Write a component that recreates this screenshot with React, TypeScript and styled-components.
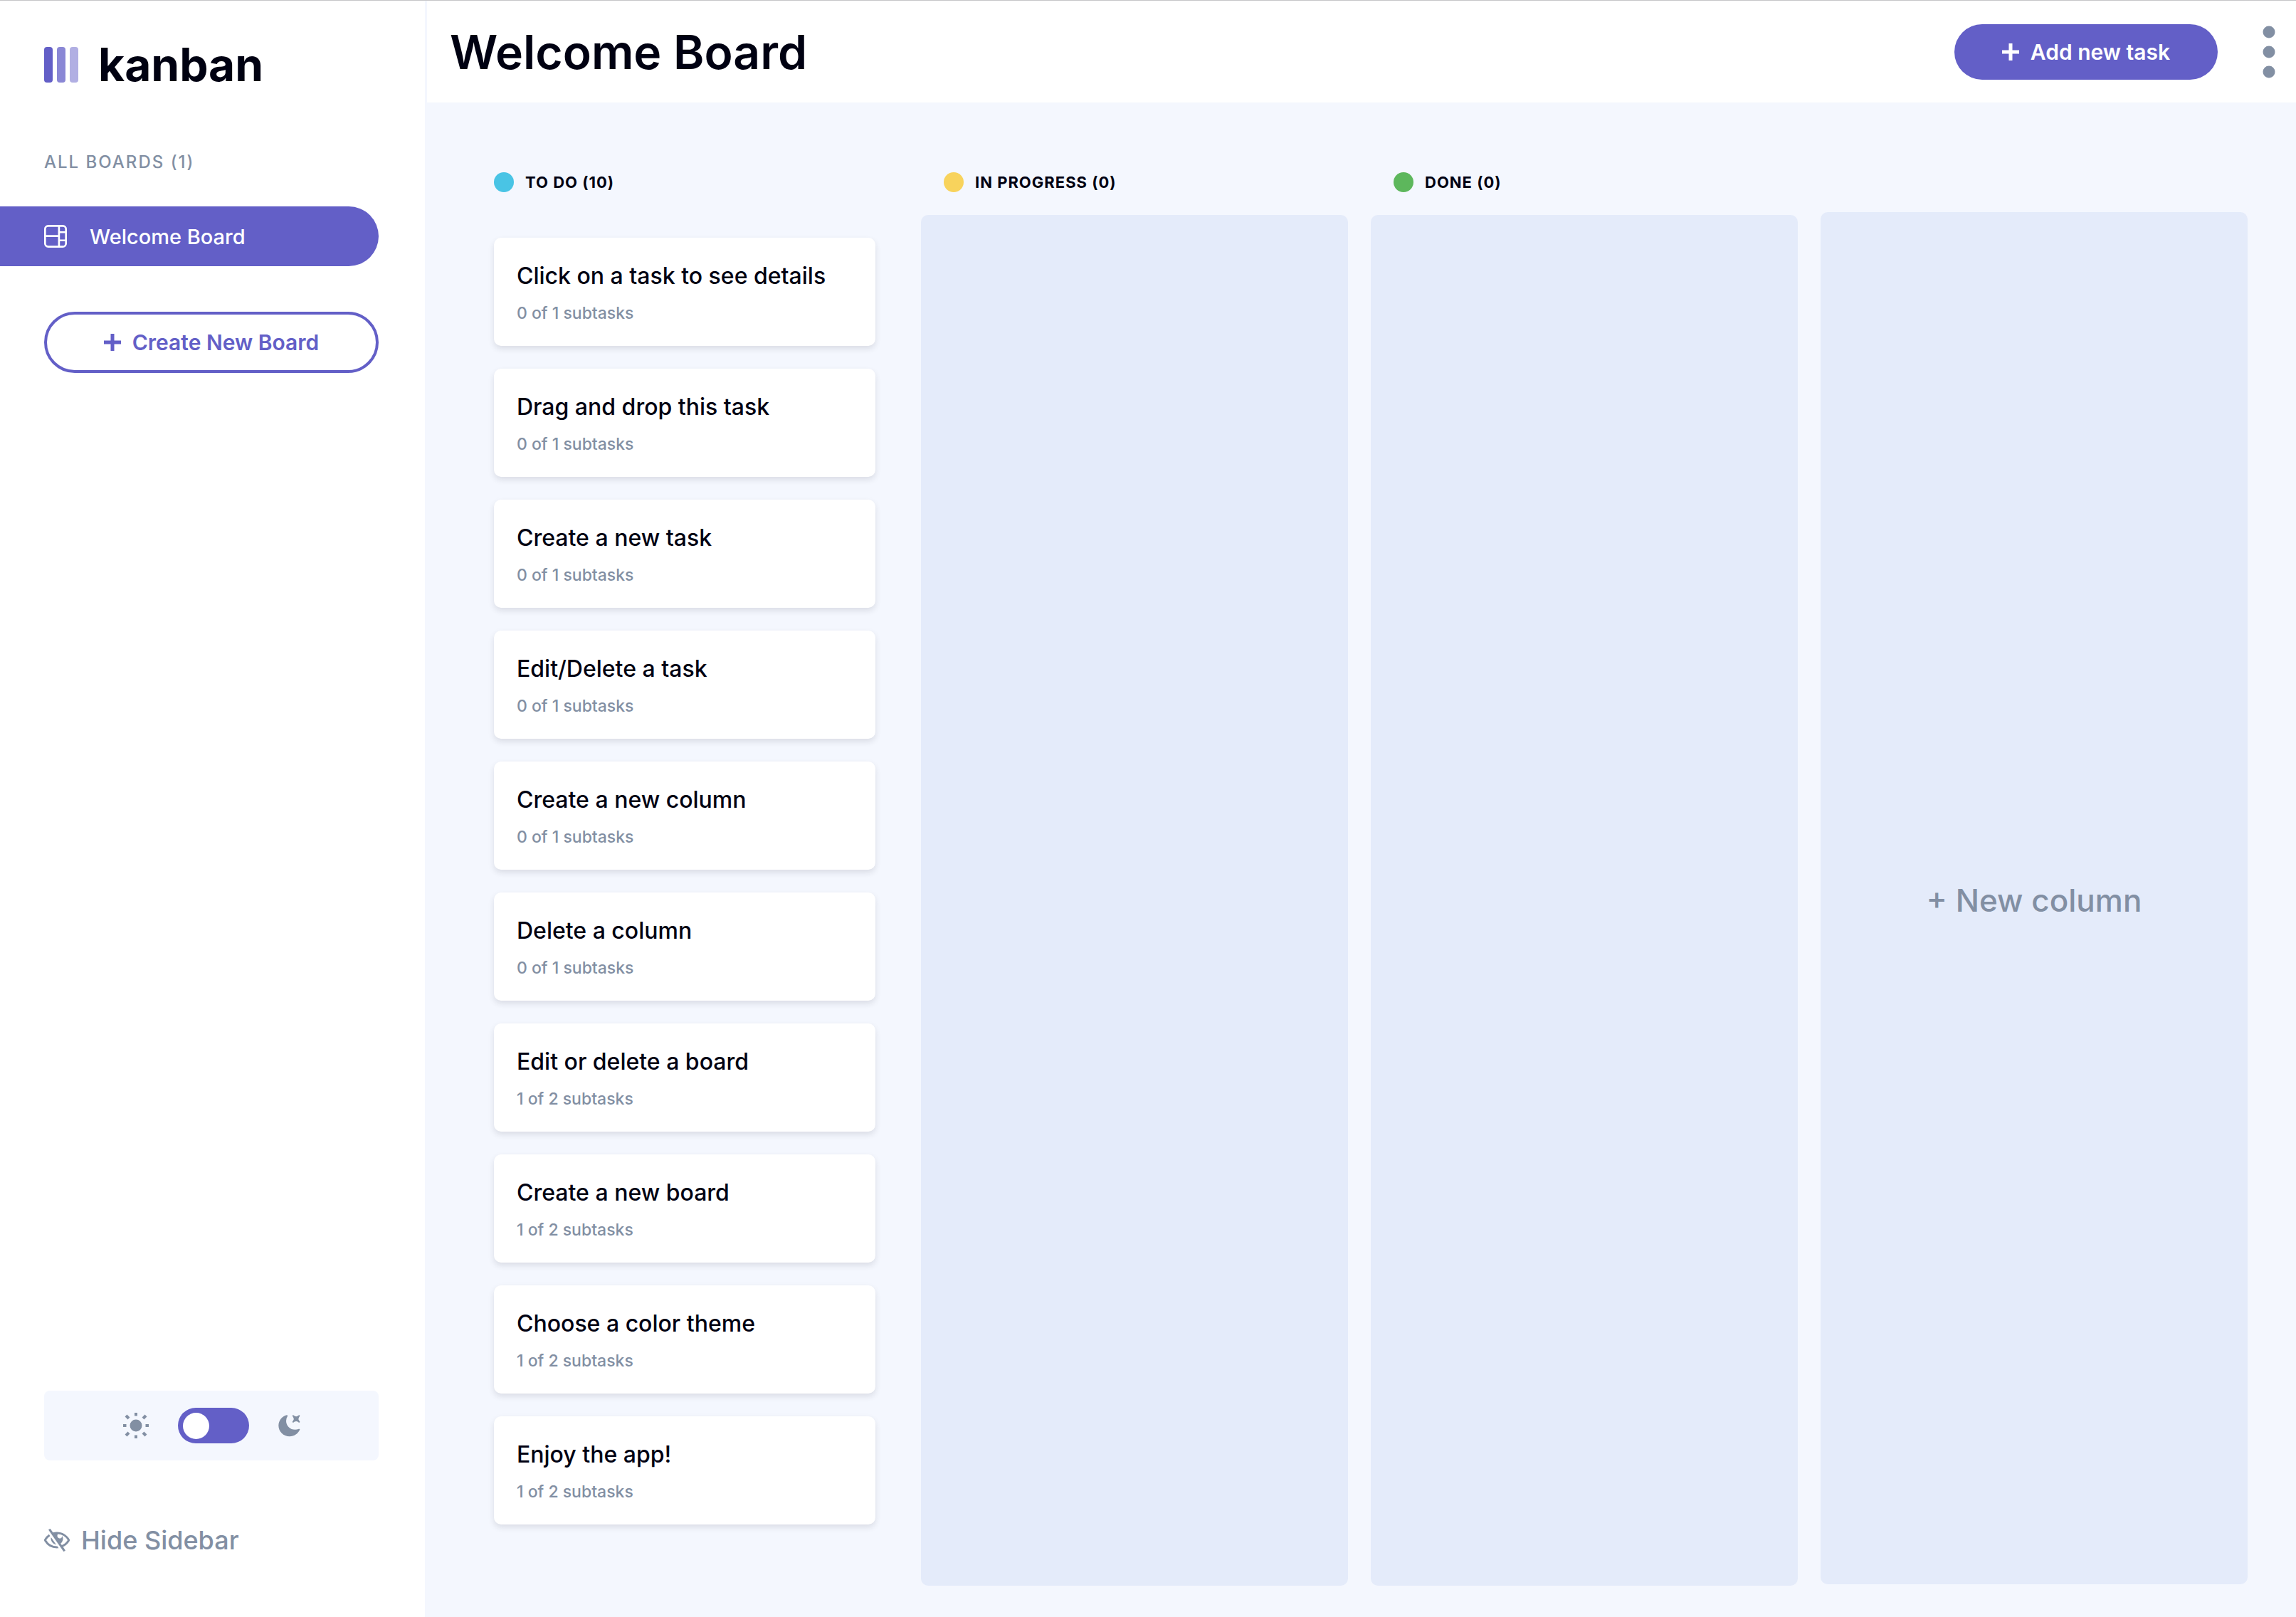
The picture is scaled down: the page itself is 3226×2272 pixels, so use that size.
import React, { useState } from 'react';
import styled, { createGlobalStyle } from 'styled-components';

const color = {
  ink: '#000112',
  muted: '#828fa3',
  accent: '#635fc7',
  page: '#f4f7fe',
  lane: '#e4ebfa',
  white: '#ffffff',
};

const GlobalStyle = createGlobalStyle`
  *, *::before, *::after { box-sizing: border-box; }
  body {
    margin: 0;
    background: ${color.page};
    color: ${color.ink};
    font-family: Inter, "Liberation Sans", sans-serif;
  }
  button { font: inherit; color: inherit; border: 0; background: none; padding: 0; cursor: pointer; }
  h1, h2, h3, p, ul { margin: 0; padding: 0; }
  ul { list-style: none; }
`;

const Page = styled.div`
  display: grid;
  grid-template-columns: 597px minmax(0, 1fr);
  min-height: 100vh;
  border-top: 1px solid #c6c6c8;
`;

const Sidebar = styled.aside`
  display: flex;
  flex-direction: column;
  background: ${color.white};
  padding: 52px 65px 84px 62px;
`;

const Logo = styled.div`
  display: flex;
  align-items: center;
  gap: 28px;
  font-size: 64px;
  line-height: 76px;
  font-weight: 700;
`;

const LogoBars = styled.svg`
  width: 48px;
  height: 50px;
`;

const BoardsLabel = styled.h2`
  margin-top: 81px;
  font-size: 24px;
  line-height: 36px;
  font-weight: 500;
  letter-spacing: 2px;
  color: ${color.muted};
`;

const BoardLink = styled.a`
  display: flex;
  align-items: center;
  gap: 32px;
  height: 84px;
  margin: 44px 0 0 -62px;
  padding-left: 62px;
  border-radius: 0 42px 42px 0;
  background: ${color.accent};
  color: ${color.white};
  font-size: 29px;
  font-weight: 500;
  text-decoration: none;

  svg { width: 32px; height: 32px; }
`;

const CreateButton = styled.button`
  display: flex;
  align-items: center;
  justify-content: center;
  gap: 16px;
  height: 86px;
  margin-top: 64px;
  border: 4px solid ${color.accent};
  border-radius: 43px;
  color: ${color.accent};
  font-size: 30px;
  font-weight: 600;
`;

const PlusIcon = styled.svg`
  width: 24px;
  height: 24px;
  flex: none;
`;

const ThemeBox = styled.div`
  display: flex;
  align-items: center;
  justify-content: center;
  gap: 40px;
  height: 98px;
  margin-top: auto;
  border-radius: 8px;
  background: ${color.page};
  color: ${color.muted};
`;

const ThemeIcon = styled.svg<{ $size: number }>`
  width: ${(p) => p.$size}px;
  height: ${(p) => p.$size}px;
`;

const Switch = styled.input`
  appearance: none;
  display: flex;
  align-items: center;
  width: 100px;
  height: 50px;
  margin: 0;
  padding: 0 7px;
  border-radius: 25px;
  background: ${color.accent};
  cursor: pointer;

  &::before {
    content: '';
    width: 37px;
    height: 37px;
    border-radius: 50%;
    background: ${color.white};
  }
  &:checked { justify-content: flex-end; }
`;

const HideButton = styled.button`
  display: flex;
  align-items: center;
  align-self: flex-start;
  gap: 16px;
  margin-top: 88px;
  color: ${color.muted};
  font-size: 36px;
  line-height: 48px;
  font-weight: 500;

  svg { width: 36px; height: 32px; }
`;

const Main = styled.main`
  display: flex;
  flex-direction: column;
  min-width: 0;
`;

const Header = styled.header`
  display: flex;
  align-items: center;
  height: 143px;
  margin-left: 3px;
  padding: 0 29px 0 32px;
  background: ${color.white};
`;

const Title = styled.h1`
  margin-right: auto;
  font-size: 66px;
  line-height: 76px;
  font-weight: 600;
`;

const AddButton = styled.button`
  display: flex;
  align-items: center;
  justify-content: center;
  gap: 16px;
  width: 370px;
  height: 78px;
  border-radius: 39px;
  background: ${color.accent};
  color: ${color.white};
  font-size: 30px;
  font-weight: 600;
`;

const MenuButton = styled.button`
  display: flex;
  margin-left: 63px;

  svg { width: 18px; height: 74px; }
`;

const Board = styled.div`
  flex: 1;
  display: grid;
  grid-template-columns: repeat(4, minmax(0, 1fr));
  gap: 32px;
  padding: 94px 68px 44px 65px;
`;

const Column = styled.section`
  display: flex;
  flex-direction: column;
`;

const ColumnTitle = styled.h2`
  display: flex;
  align-items: center;
  gap: 16px;
  height: 36px;
  margin: 0 0 28px 32px;
  font-size: 22px;
  font-weight: 700;
  letter-spacing: 1px;
`;

const Dot = styled.span<{ $color: string }>`
  width: 28px;
  height: 28px;
  border-radius: 50%;
  background: ${(p) => p.$color};
`;

const Lane = styled.ul<{ $empty: boolean }>`
  flex: 1;
  display: flex;
  flex-direction: column;
  gap: 32px;
  padding: 32px;
  border-radius: 10px;
  background: ${(p) => (p.$empty ? color.lane : 'transparent')};
`;

const Card = styled.button`
  display: flex;
  flex-direction: column;
  gap: 12px;
  width: 100%;
  padding: 32px 32px 28px;
  border-radius: 10px;
  background: ${color.white};
  box-shadow: 0 4px 8px rgba(30, 35, 50, 0.12);
  text-align: left;
`;

const CardTitle = styled.span`
  font-size: 32px;
  line-height: 44px;
  font-weight: 500;
`;

const CardMeta = styled.span`
  font-size: 23px;
  line-height: 36px;
  font-weight: 500;
  color: ${color.muted};
`;

const NewColumn = styled.button`
  margin: 60px 0 2px;
  padding-top: 6px;
  border-radius: 10px;
  background: ${color.lane};
  color: ${color.muted};
  font-size: 44px;
  font-weight: 500;
`;

const Plus = () => (
  <PlusIcon viewBox="0 0 24 24" fill="currentColor" aria-hidden="true">
    <path d="M9.500 0h5v9.500H24v5h-9.500V24h-5v-9.500H0v-5h9.500z" />
  </PlusIcon>
);

const Sun = () => (
  <ThemeIcon $size={38} viewBox="0 0 38 38" aria-hidden="true">
    <circle cx="19" cy="19" r="8.500" fill="currentColor" />
    <path
      d="M19 1v4.500M19 32.500V37M1 19h4.500M32.500 19H37M5 5l4 4M29 29l4 4M5 33l4-4M29 9l4-4"
      stroke="currentColor"
      strokeWidth="4"
    />
  </ThemeIcon>
);

const Moon = () => (
  <ThemeIcon $size={32} viewBox="0 0 16 16" fill="currentColor" aria-hidden="true">
    <path d="M6.474.682c.434-.11.718.406.481.78A6.067 6.067 0 0 0 6.01 4.720c0 3.418 2.827 6.187 6.314 6.187.89.002 1.770-.182 2.584-.54.408-.18.894.165.724.57-1.160 2.775-3.944 4.730-7.194 4.730-4.292 0-7.771-3.410-7.771-7.615 0-3.541 2.466-6.518 5.807-7.370Zm8.433.07c.442-.294.969.232.674.674l-.525.787a1.943 1.943 0 0 0 0 2.157l.525.788c.295.441-.232.968-.674.673l-.787-.525a1.943 1.943 0 0 0-2.157 0l-.786.525c-.442.295-.97-.232-.675-.673l.525-.788a1.943 1.943 0 0 0 0-2.157l-.525-.787c-.295-.442.232-.968.674-.673l.787.525a1.943 1.943 0 0 0 2.157 0l.787-.526Z" />
  </ThemeIcon>
);

const BoardIcon = () => (
  <svg viewBox="0 0 16 16" fill="currentColor" aria-hidden="true">
    <path d="M0 2.889A2.889 2.889 0 0 1 2.889 0H13.110A2.889 2.889 0 0 1 16 2.889V13.110A2.888 2.888 0 0 1 13.111 16H2.890A2.889 2.889 0 0 1 0 13.111V2.890Zm1.333 5.555v4.667c0 .859.697 1.556 1.556 1.556h6.889V8.444H1.333Zm8.445-1.333V1.333h-6.890A1.556 1.556 0 0 0 1.334 2.890V7.110h8.445Zm4.889-1.333H11.110v4.444h3.556V5.778Zm0 5.778H11.110v3.110h2a1.556 1.556 0 0 0 1.556-1.555v-1.555Zm0-7.112V2.890a1.555 1.555 0 0 0-1.556-1.556h-2v3.111h3.556Z" />
  </svg>
);

const EyeOff = () => (
  <svg viewBox="0 0 18 16" fill="currentColor" aria-hidden="true">
    <path d="M8.522 11.223a4.252 4.252 0 0 1-3.654-5.220l3.654 5.220ZM9 12.250A8.685 8.685 0 0 1 1.500 8a8.612 8.612 0 0 1 2.760-2.864l-.86-1.230A10.112 10.112 0 0 0 .208 7.238a1.500 1.500 0 0 0 0 1.524A10.187 10.187 0 0 0 9 13.750c.414 0 .828-.025 1.239-.074l-1-1.430A8.880 8.880 0 0 1 9 12.250Zm8.792-3.488a10.140 10.140 0 0 1-4.486 4.046l1.504 2.148a.375.375 0 0 1-.092.523l-.648.453a.375.375 0 0 1-.523-.092L3.190 1.044A.375.375 0 0 1 3.282.52L3.930.068a.375.375 0 0 1 .523.092l1.735 2.479A10.308 10.308 0 0 1 9 2.250c3.746 0 7.031 2 8.792 4.988a1.500 1.500 0 0 1 0 1.524ZM16.500 8a8.674 8.674 0 0 0-6.755-4.219A1.750 1.750 0 1 0 12.750 5v-.001a4.250 4.250 0 0 1-1.154 5.366l.834 1.192A8.641 8.641 0 0 0 16.500 8Z" />
  </svg>
);

type Task = { title: string; done: number; total: number };

const todo: Task[] = [
  { title: 'Click on a task to see details', done: 0, total: 1 },
  { title: 'Drag and drop this task', done: 0, total: 1 },
  { title: 'Create a new task', done: 0, total: 1 },
  { title: 'Edit/Delete a task', done: 0, total: 1 },
  { title: 'Create a new column', done: 0, total: 1 },
  { title: 'Delete a column', done: 0, total: 1 },
  { title: 'Edit or delete a board', done: 1, total: 2 },
  { title: 'Create a new board', done: 1, total: 2 },
  { title: 'Choose a color theme', done: 1, total: 2 },
  { title: 'Enjoy the app!', done: 1, total: 2 },
];

const columns: { name: string; color: string; tasks: Task[] }[] = [
  { name: 'TO DO', color: '#49c4e5', tasks: todo },
  { name: 'IN PROGRESS', color: '#f8d35c', tasks: [] },
  { name: 'DONE', color: '#5db75c', tasks: [] },
];

export default function App() {
  const [dark, setDark] = useState(false);

  return (
    <>
      <GlobalStyle />
      <Page>
        <Sidebar>
          <Logo>
            <LogoBars viewBox="0 0 48 50" fill={color.accent} aria-hidden="true">
              <rect width="12" height="50" rx="4" />
              <rect x="18" width="12" height="50" rx="4" opacity="0.75" />
              <rect x="36" width="12" height="50" rx="4" opacity="0.5" />
            </LogoBars>
            kanban
          </Logo>
          <BoardsLabel>ALL BOARDS (1)</BoardsLabel>
          <nav>
            <BoardLink href="#welcome">
              <BoardIcon />
              Welcome Board
            </BoardLink>
          </nav>
          <CreateButton type="button">
            <Plus />
            Create New Board
          </CreateButton>
          <ThemeBox>
            <Sun />
            <Switch
              type="checkbox"
              role="switch"
              aria-label="Dark theme"
              checked={dark}
              onChange={(e) => setDark(e.target.checked)}
            />
            <Moon />
          </ThemeBox>
          <HideButton type="button">
            <EyeOff />
            Hide Sidebar
          </HideButton>
        </Sidebar>
        <Main>
          <Header>
            <Title>Welcome Board</Title>
            <AddButton type="button">
              <Plus />
              Add new task
            </AddButton>
            <MenuButton type="button" aria-label="Board menu">
              <svg viewBox="0 0 18 74" fill={color.muted} aria-hidden="true">
                <circle cx="9" cy="9" r="8.500" />
                <circle cx="9" cy="37" r="8.500" />
                <circle cx="9" cy="65" r="8.500" />
              </svg>
            </MenuButton>
          </Header>
          <Board>
            {columns.map((column) => (
              <Column key={column.name}>
                <ColumnTitle>
                  <Dot $color={column.color} />
                  {`${column.name} (${column.tasks.length})`}
                </ColumnTitle>
                <Lane $empty={column.tasks.length === 0}>
                  {column.tasks.map((task) => (
                    <li key={task.title}>
                      <Card type="button">
                        <CardTitle>{task.title}</CardTitle>
                        <CardMeta>{`${task.done} of ${task.total} subtasks`}</CardMeta>
                      </Card>
                    </li>
                  ))}
                </Lane>
              </Column>
            ))}
            <NewColumn type="button">+ New column</NewColumn>
          </Board>
        </Main>
      </Page>
    </>
  );
}
